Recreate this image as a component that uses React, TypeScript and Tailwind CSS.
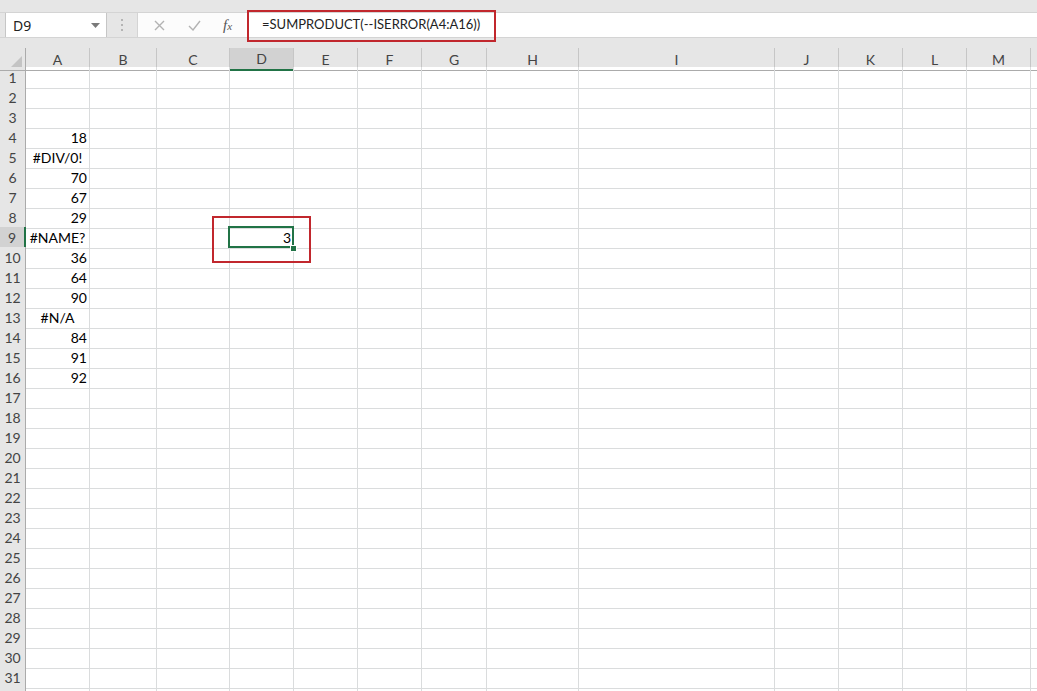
import React from "react"

// column headers in order, widths include the 1px right border
const columns = ["A", "B", "C", "D", "E", "F", "G", "H", "I", "J", "K", "L", "M", ""]

const gridCols =
  "grid grid-cols-[26px_64px_67px_73px_64px_64px_64px_65px_92px_196px_64px_64px_64px_64px_1fr]"

type CellValue = { text: string; align: "right" | "center" }

// values in column A
const colA: Record<number, CellValue> = {
  4: { text: "18", align: "right" },
  5: { text: "#DIV/0!", align: "center" },
  6: { text: "70", align: "right" },
  7: { text: "67", align: "right" },
  8: { text: "29", align: "right" },
  9: { text: "#NAME?", align: "center" },
  10: { text: "36", align: "right" },
  11: { text: "64", align: "right" },
  12: { text: "90", align: "right" },
  13: { text: "#N/A", align: "center" },
  14: { text: "84", align: "right" },
  15: { text: "91", align: "right" },
  16: { text: "92", align: "right" },
}

const cellFont = { fontFamily: "Lato, 'Open Sans', sans-serif" }

function FormulaBar() {
  return (
    <div className="relative h-[48px] shrink-0 bg-[#e6e6e6]">
      <div className="h-[12px]" />
      <div className="flex h-[26px] items-stretch border-y border-[#d4d4d4] bg-[#e6e6e6]">
        {/* Name box */}
        <div className="ml-[5px] flex w-[102px] items-center justify-between border-x border-[#c6c6c6] bg-white pl-[7px] pr-[6px]">
          <span className="text-[14px] text-[#222]" style={{ fontFamily: "'Noto Sans', sans-serif" }}>
            D9
          </span>
          <svg width="9" height="5" viewBox="0 0 9 5">
            <path d="M0 0h9L4.5 5z" fill="#7a7a7a" />
          </svg>
        </div>

        {/* separator dots */}
        <div className="flex w-[30px] flex-col items-center justify-center gap-[3px]">
          <span className="h-[2px] w-[2px] bg-[#b4b4b4]" />
          <span className="h-[2px] w-[2px] bg-[#b4b4b4]" />
          <span className="h-[2px] w-[2px] bg-[#b4b4b4]" />
        </div>

        {/* cancel / enter / fx */}
        <div className="flex w-[108px] items-center border-l border-[#d4d4d4] bg-[#fcfcfc]">
          <svg className="ml-[16px]" width="11" height="11" viewBox="0 0 11 11">
            <path d="M1 1l9 9M10 1l-9 9" stroke="#b3b3b3" strokeWidth="1.4" />
          </svg>
          <svg className="ml-[23px]" width="13" height="11" viewBox="0 0 13 11">
            <path d="M1 6l4 4 7-9" stroke="#b3b3b3" strokeWidth="1.4" fill="none" />
          </svg>
          <span
            className="ml-[22px] text-[15px] italic text-[#555]"
            style={{ fontFamily: "'Liberation Serif', serif" }}
          >
            f<span className="text-[11px]">x</span>
          </span>
        </div>

        {/* formula input */}
        <div className="flex flex-1 items-center bg-white pl-[17px]">
          <span className="text-[13px] text-[#222]" style={cellFont}>
            =SUMPRODUCT(--ISERROR(A4:A16))
          </span>
        </div>
      </div>

      {/* red highlight round the formula */}
      <div className="absolute left-[247px] top-[10px] h-[32px] w-[249px] border-2 border-[#c1272d]" />
    </div>
  )
}

function HeaderRow() {
  return (
    <div className={`${gridCols} h-[19px] shrink-0 bg-[#e6e6e6]`}>
      <div className="relative border-r border-b border-[#ababab]">
        <svg className="absolute right-[3px] bottom-[3px]" width="11" height="11" viewBox="0 0 11 11">
          <path d="M11 0v11H0z" fill="#c4c4c4" />
        </svg>
      </div>
      {columns.map((c, i) => {
        const selected = c === "D"
        return (
          <div
            key={i}
            className={`flex items-center justify-center text-[14px] text-[#444] ${
              i < columns.length - 1 ? "border-r border-[#c6c6c6]" : ""
            } ${selected ? "border-b-2 border-b-[#217346] bg-[#d2d2d2]" : "border-b border-b-[#ababab]"}`}
            style={cellFont}
          >
            {c}
          </div>
        )
      })}
    </div>
  )
}

function SheetRow({ n, label = true }: { n: number; label?: boolean }) {
  const a = colA[n]
  const selectedRow = n === 9
  return (
    <div className={`${gridCols} h-[20px] shrink-0`}>
      <div
        className={`flex items-center justify-center border-b border-[#c6c6c6] text-[14px] text-[#444] ${
          selectedRow ? "border-r-2 border-r-[#217346] bg-[#d2d2d2]" : "border-r border-r-[#ababab] bg-[#e6e6e6]"
        }`}
        style={cellFont}
      >
        {label ? n : null}
      </div>
      {columns.map((c, i) => {
        const last = i === columns.length - 1
        const isD9 = n === 9 && c === "D"
        return (
          <div
            key={i}
            className={`relative flex items-center border-b border-[#dadcdd] px-[2px] text-[14px] text-black ${
              last ? "" : "border-r"
            } ${c === "A" && a?.align === "center" ? "justify-center" : "justify-end"}`}
            style={cellFont}
          >
            {c === "A" && a ? a.text : null}
            {isD9 ? (
              <>
                <span className="relative">3</span>
                <div className="absolute -left-[2px] -top-[1px] z-10 h-[22px] w-[66px] border-2 border-[#217346]" />
                <div className="absolute -right-[4px] -bottom-[4px] z-20 h-[7px] w-[7px] border border-white bg-[#217346]" />
              </>
            ) : null}
          </div>
        )
      })}
    </div>
  )
}

export default function App() {
  const rows = Array.from({ length: 31 }, (_, i) => i + 1)
  return (
    <div className="relative flex h-[691px] w-full flex-col overflow-hidden bg-white">
      <FormulaBar />
      <HeaderRow />
      {rows.map((n) => (
        <SheetRow key={n} n={n} />
      ))}
      {/* only a sliver of row 32 is visible */}
      <SheetRow n={32} label={false} />
      {/* red highlight round the result cell */}
      <div className="absolute left-[212px] top-[216px] z-30 h-[47px] w-[99px] border-2 border-[#c1272d]" />
    </div>
  )
}
